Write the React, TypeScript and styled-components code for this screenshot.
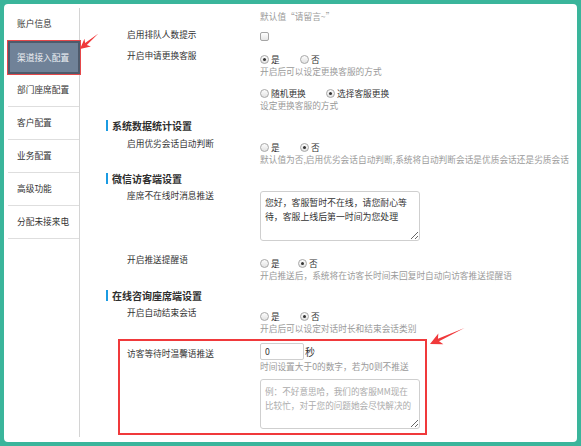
import React from 'react';
import styled, { createGlobalStyle, css } from 'styled-components';

const GlobalStyle = createGlobalStyle`
  html, body {
    margin: 0;
    padding: 0;
  }
  body {
    font-family: "Noto Sans CJK SC", "Noto Sans", "Liberation Sans", sans-serif;
    background: #3ab59b;
  }
`;

const Frame = styled.div`
  box-sizing: border-box;
  height: 446px;
  padding: 4px;
  background: #3ab59b;
`;

const Panel = styled.div`
  position: relative;
  height: 100%;
  display: flex;
  background: #fff;
  border-radius: 4px;
  overflow: hidden;
`;

const Sidebar = styled.nav`
  flex-shrink: 0;
  width: 71px;
  margin: 4px 0 5px 4px;
  border-right: 1px solid #d4d4d4;
`;

const NavItem = styled.div<{ $active?: boolean }>`
  box-sizing: border-box;
  height: 33px;
  line-height: 32px;
  padding-left: 9px;
  font-size: 8.7px;
  color: #333;
  border-bottom: 1px solid #dedede;
  white-space: nowrap;

  ${({ $active }) =>
    $active &&
    css`
      position: relative;
      width: calc(100% + 1px);
      line-height: 29px;
      padding-left: 7px;
      background: #708298;
      color: #eef1f4;
      border: 2px solid #4e5b6c;
      box-shadow: 0 0 0 1px #e5484a;
    `}
`;

const Main = styled.main`
  flex: 1;
  padding-top: 6px;
  font-size: 8.7px;
  color: #333;
  min-width: 0;
`;

const Row = styled.div<{ $gap?: number }>`
  display: grid;
  grid-template-columns: 133px 1fr;
  padding-left: 47px;
  margin-top: ${({ $gap }) => $gap ?? 0}px;
`;

const HighlightRow = styled(Row)`
  box-sizing: border-box;
  width: 309px;
  margin-left: 38px;
  padding: 2px 0 4px 7px;
  border: 2px solid #f0393b;
`;

const Label = styled.div<{ $shift?: number }>`
  line-height: 12px;
  margin-top: ${({ $shift }) => $shift ?? -3}px;
  white-space: nowrap;
`;

const Controls = styled.div`
  display: flex;
  flex-direction: column;
  align-items: flex-start;
`;

const Desc = styled.div<{ $gap?: number }>`
  line-height: 14px;
  color: #9a9a9a;
  white-space: nowrap;
  margin-top: ${({ $gap }) => $gap ?? 0}px;
`;

const ChoiceLine = styled.div<{ $gap?: number }>`
  display: flex;
  align-items: center;
  height: 12px;
  margin-top: ${({ $gap }) => $gap ?? 0}px;
`;

const Choice = styled.span<{ $w: number }>`
  display: inline-flex;
  align-items: center;
  width: ${({ $w }) => $w}px;
  white-space: nowrap;
  color: #333;
`;

const RadioMark = styled.span<{ $on?: boolean }>`
  position: relative;
  box-sizing: border-box;
  flex-shrink: 0;
  width: 9px;
  height: 9px;
  margin-right: 2px;
  border-radius: 50%;
  border: 1px solid #a8a8a8;
  background: linear-gradient(#fdfdfd, #e2e2e2);

  ${({ $on }) =>
    $on &&
    css`
      &::after {
        content: '';
        position: absolute;
        left: 2px;
        top: 2px;
        width: 3px;
        height: 3px;
        border-radius: 50%;
        background: #333;
      }
    `}
`;

const CheckMark = styled.span`
  box-sizing: border-box;
  width: 9px;
  height: 9px;
  border: 1px solid #a5a5a5;
  border-radius: 2px;
  background: linear-gradient(#fff, #e6e6e6);
`;

const SectionHeader = styled.h3<{ $gap: number }>`
  display: flex;
  align-items: center;
  height: 16px;
  margin: ${({ $gap }) => $gap}px 0 0 26px;
  font-size: 10px;
  font-weight: 600;
  color: #2f2f2f;
  white-space: nowrap;

  &::before {
    content: '';
    width: 2px;
    height: 11px;
    margin-right: 4px;
    background: #1b9be2;
  }
`;

const TextBox = styled.textarea<{ $gap?: number }>`
  box-sizing: border-box;
  display: block;
  width: 160px;
  height: 50px;
  margin: ${({ $gap }) => $gap ?? 0}px 0 0 0;
  padding: 4px 4px;
  border: 1px solid #cfcfcf;
  border-radius: 3px;
  font-family: "Noto Sans CJK SC", "Noto Sans", sans-serif;
  font-size: 8.9px;
  line-height: 14px;
  color: #333;
  resize: both;
  overflow: hidden;
  outline: none;

  &::placeholder {
    color: #ababab;
    font-size: 8.6px;
  }
`;

const InputLine = styled.div`
  display: flex;
  align-items: center;
  height: 17px;
`;

const NumberInput = styled.input`
  box-sizing: border-box;
  width: 44px;
  height: 17px;
  padding: 0 4px;
  border: 1px solid #cfcfcf;
  border-radius: 2px;
  font-family: "Noto Sans CJK SC", "Noto Sans", sans-serif;
  font-size: 8.7px;
  color: #333;
  outline: none;
`;

const Unit = styled.span`
  margin-left: 1px;
  font-size: 10px;
  color: #333;
`;

const Overlay = styled.svg`
  position: absolute;
  inset: 0;
  width: 100%;
  height: 100%;
  pointer-events: none;
`;

const navItems = ['账户信息', '渠道接入配置', '部门座席配置', '客户配置', '业务配置', '高级功能', '分配未接来电'];

type ArrowProps = { x: number; y: number; angle: number; len: number; head: number };

// tip at (x, y), pointing along angle (degrees)
const Arrow: React.FC<ArrowProps> = ({ x, y, angle, len, head }) => {
  const hw = head * 0.5;
  const pts = [
    [0, 0],
    [-head, -hw],
    [-head * 0.78, -1.3],
    [-len, 0],
    [-head * 0.78, 1.3],
    [-head, hw],
  ]
    .map(p => p.join(','))
    .join(' ');
  return <polygon points={pts} fill="#f0393b" transform={`translate(${x} ${y}) rotate(${angle})`} />;
};

const Radios: React.FC<{ items: [string, number][]; on: number; gap?: number }> = ({ items, on, gap }) => (
  <ChoiceLine $gap={gap}>
    {items.map(([text, w], i) => (
      <Choice key={text} $w={w}>
        <RadioMark $on={i === on} />
        {text}
      </Choice>
    ))}
  </ChoiceLine>
);

export default function App() {
  return (
    <Frame>
      <GlobalStyle />
      <Panel>
        <Sidebar>
          {navItems.map((item, i) => (
            <NavItem key={item} $active={i === 1}>
              {item}
            </NavItem>
          ))}
        </Sidebar>

        <Main>
          <Row>
            <div />
            <Controls>
              <Desc>默认值“请留言~”</Desc>
            </Controls>
          </Row>

          <Row $gap={6}>
            <Label $shift={-1}>启用排队人数提示</Label>
            <Controls>
              <ChoiceLine>
                <CheckMark />
              </ChoiceLine>
            </Controls>
          </Row>

          <Row $gap={11}>
            <Label>开启申请更换客服</Label>
            <Controls>
              <Radios items={[['是', 40], ['否', 40]]} on={0} />
              <Desc>开启后可以设定更换客服的方式</Desc>
              <Radios items={[['随机更换', 66], ['选择客服更换', 80]]} on={1} gap={8} />
              <Desc>设定更换客服的方式</Desc>
            </Controls>
          </Row>

          <SectionHeader $gap={4}>系统数据统计设置</SectionHeader>

          <Row $gap={8}>
            <Label>启用优劣会话自动判断</Label>
            <Controls>
              <Radios items={[['是', 40], ['否', 40]]} on={1} />
              <Desc>默认值为否,启用优劣会话自动判断,系统将自动判断会话是优质会话还是劣质会话</Desc>
            </Controls>
          </Row>

          <SectionHeader $gap={3}>微信访客端设置</SectionHeader>

          <Row $gap={5}>
            <Label $shift={-1}>座席不在线时消息推送</Label>
            <Controls>
              <TextBox readOnly defaultValue="您好，客服暂时不在线，请您耐心等待，客服上线后第一时间为您处理" />
            </Controls>
          </Row>

          <Row $gap={16}>
            <Label>开启推送提醒语</Label>
            <Controls>
              <Radios items={[['是', 38], ['否', 40]]} on={1} />
              <Desc>开启推送后，系统将在访客长时间未回复时自动向访客推送提醒语</Desc>
            </Controls>
          </Row>

          <SectionHeader $gap={4}>在线咨询座席端设置</SectionHeader>

          <Row $gap={7}>
            <Label>开启自动结束会话</Label>
            <Controls>
              <Radios items={[['是', 40], ['否', 40]]} on={1} />
              <Desc>开启后可以设定对话时长和结束会话类别</Desc>
            </Controls>
          </Row>

          <HighlightRow $gap={3}>
            <Label $shift={5}>访客等待时温馨语推送</Label>
            <Controls>
              <InputLine>
                <NumberInput readOnly defaultValue="0" />
                <Unit>秒</Unit>
              </InputLine>
              <Desc>时间设置大于0的数字，若为0则不推送</Desc>
              <TextBox
                $gap={5}
                readOnly
                placeholder="例：不好意思哈，我们的客服MM现在比较忙，对于您的问题她会尽快解决的"
              />
            </Controls>
          </HighlightRow>
        </Main>

        <Overlay>
          <Arrow x={76} y={45} angle={140} len={24} head={10} />
          <Arrow x={426} y={340} angle={155} len={38} head={12} />
        </Overlay>
      </Panel>
    </Frame>
  );
}
